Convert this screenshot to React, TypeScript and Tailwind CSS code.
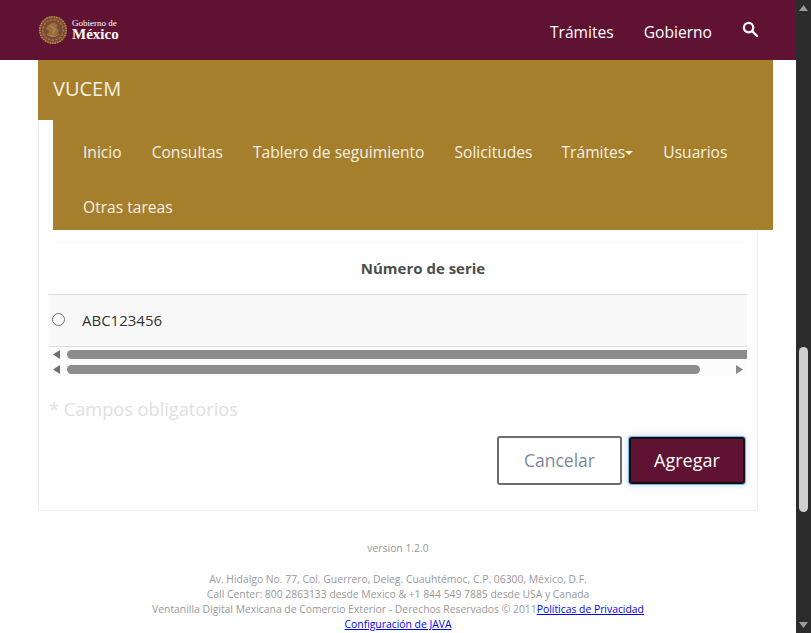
import React from "react";

const topLinks = ["Trámites", "Gobierno"];
const menu = ["Inicio", "Consultas", "Tablero de seguimiento", "Solicitudes"];

const Escudo = () => (
  <svg width="30" height="30" viewBox="0 0 30 30" fill="none">
    <circle cx="15" cy="15" r="14" fill="#7c4a35" />
    <circle cx="15" cy="15" r="13.2" stroke="#b5864a" strokeWidth="1.6" strokeDasharray="1.5 1" />
    <circle cx="15" cy="15" r="10.2" stroke="#a9793f" strokeWidth="1.2" strokeDasharray="2.5 1.2" />
    <path d="M9 12c2-3 5-5 8-4l3 2-2 2 3 3-2 4-5 3-4-3 1-3-3-2z" fill="#9c6f3e" />
    <path d="M12 11l5 3-2 4M9 19c3 3 9 3 12 0" stroke="#c49a5a" strokeWidth="0.9" />
  </svg>
);

const ArrowLeft = () => (
  <svg width="7" height="9" viewBox="0 0 7 9"><path d="M7 0v9L0 4.500z" fill="#6f6f6f" /></svg>
);

export default function App() {
  return (
    <div className="flex h-[633px] w-[811px] overflow-hidden bg-white font-['Open_Sans',sans-serif]">
      <div className="w-[796px] shrink-0">
        <header className="flex h-[60px] items-center bg-[#5f1232] pl-[38px] pr-[38px] text-white">
          <Escudo />
          <div className="ml-[4px] font-['Liberation_Serif',serif] leading-none">
            <div className="text-[9px] leading-[9px]">Gobierno de</div>
            <div className="text-[15px] leading-[13px] font-bold">México</div>
          </div>
          <nav className="ml-auto flex items-center gap-[30px] pt-[6px] text-[15.6px]">
            {topLinks.map((l) => (
              <a key={l}>{l}</a>
            ))}
            <svg className="mb-[8px]" width="16" height="16" viewBox="0 0 17 17" fill="none" stroke="white" strokeWidth="2.4">
              <circle cx="7" cy="7" r="5" />
              <path d="M11 11l5 5" strokeLinecap="round" />
            </svg>
          </nav>
        </header>

        <div className="ml-[38px] w-[735px]">
          <div className="flex h-[60px] items-center bg-[#a57f2c] pb-[2px] pl-[15px] text-[20px] text-[#f5f0e3]">VUCEM</div>
          <div className="border-l border-[#eeeeee] pl-[14px]">
            <div className="h-[110px] bg-[#a57f2c] text-[15.6px] text-[#f5f0e3]">
              <div className="flex h-[55px] items-center gap-[30px] whitespace-nowrap px-[30px] pt-[10px]">
                {menu.map((m) => (
                  <a key={m}>{m}</a>
                ))}
                <a className="-ml-[1px] flex items-center">
                  Trámites
                  <span className="mt-[2px] border-x-[4px] border-t-[4px] border-x-transparent border-t-[#f5f0e3]" />
                </a>
                <a>Usuarios</a>
              </div>
              <div className="flex h-[55px] items-center px-[30px] pt-[10px]">
                <a>Otras tareas</a>
              </div>
            </div>
          </div>
        </div>

        <main className="ml-[38px] h-[281px] w-[720px] border-x border-b border-[#eeeeee] bg-white px-[10px]">
          <div className="h-[13px] border-b border-[#fbfbfb]" />
          <div className="pt-[16px] pb-[16px] pl-[50px] text-center text-[15px] leading-[19px] font-bold text-[#4d4d4d]">Número de serie</div>
          <div className="w-[698px]">
            <div className="flex h-[53px] items-center border-y border-[#dddddd] bg-[#f9f9f9] pl-[3px] text-[15px] text-[#333333]">
              <span className="mb-[2px] h-[13px] w-[13px] rounded-full border border-[#767676] bg-white" />
              <span className="ml-[17px]">ABC123456</span>
            </div>
            <div className="flex h-[14px] items-center bg-[#fbfbfb] pl-[4px]">
              <ArrowLeft />
              <div className="ml-[7px] h-[9px] flex-1 rounded-l-full bg-[#8c8c8c]" />
            </div>
            <div className="flex h-[15px] items-center bg-[#fbfbfb] pl-[4px] pt-[2px]">
              <ArrowLeft />
              <div className="ml-[7px] h-[9px] w-[633px] rounded-full bg-[#8c8c8c]" />
              <svg className="ml-[35px]" width="8" height="9" viewBox="0 0 8 9"><path d="M1 0v9l7-4.500z" fill="#8a8a8a" /></svg>
            </div>
          </div>
          <div className="mt-[21px] text-[18.2px] leading-[24px] text-[#e0e0e0]">* Campos obligatorios</div>
          <div className="mt-[15px] flex w-[697px] justify-end gap-[7px]">
            <button className="h-[49px] w-[125px] rounded-[3px] border-2 border-[#6c6c6c] bg-white text-[17.5px] text-[#7b8a96]">Cancelar</button>
            <button className="mt-[1px] mr-[1px] h-[47px] w-[116px] rounded-[3px] border-2 border-[#111111] bg-[#5f1232] text-[18px] text-white shadow-[0_0_0_1px_#7fb2ea,0_0_6px_2px_rgba(110,163,221,0.3)]">Agregar</button>
          </div>
        </main>

        <footer className="pt-[30px] text-center text-[10.36px] leading-[15px] text-[#999999]">
          <div>version 1.2.0</div>
          <div className="mt-[16px]">Av. Hidalgo No. 77, Col. Guerrero, Deleg. Cuauhtémoc, C.P. 06300, México, D.F.</div>
          <div>Call Center: 800 2863133 desde Mexico &amp; +1 844 549 7885 desde USA y Canada</div>
          <div>
            Ventanilla Digital Mexicana de Comercio Exterior - Derechos Reservados © 2011
            <a className="text-[#0000ee] underline">Políticas de Privacidad</a>
          </div>
          <a className="text-[#0000ee] underline">Configuración de JAVA</a>
        </footer>
      </div>

      <div className="relative w-[15px] shrink-0 bg-[#2c2c2c]">
        <svg className="absolute left-[3px] top-[5px]" width="9" height="6" viewBox="0 0 9 6"><path d="M4.500 0L9 6H0z" fill="#9b9b9b" /></svg>
        <div className="absolute left-[3px] top-[347px] h-[165px] w-[9px] rounded-full bg-[#d0d0d0]" />
        <svg className="absolute left-[3px] bottom-[5px]" width="9" height="6" viewBox="0 0 9 6"><path d="M0 0h9L4.500 6z" fill="#9b9b9b" /></svg>
      </div>
    </div>
  );
}
